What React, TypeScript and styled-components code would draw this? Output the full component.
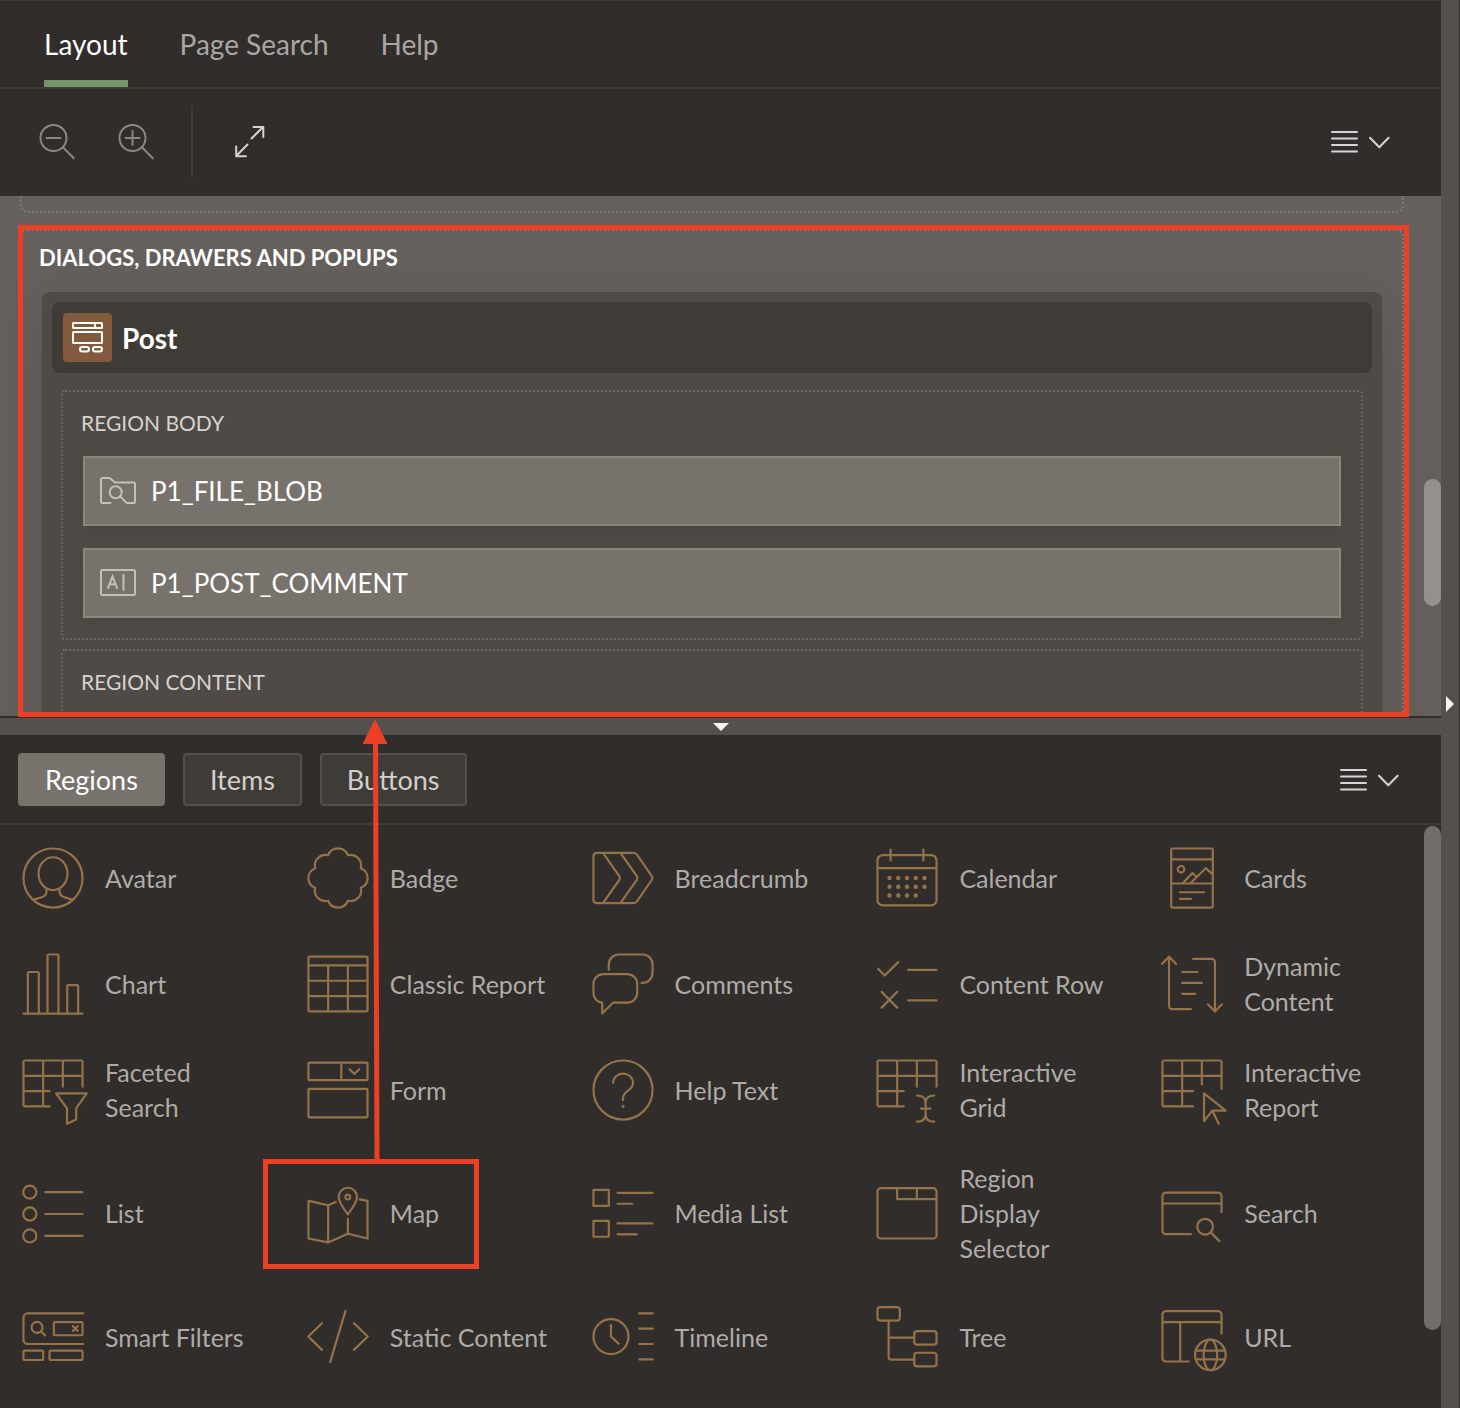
import React, { useState } from "react";
import styled, { createGlobalStyle, css } from "styled-components";

const color = {
  pane: "#312d2a",
  line: "#403c38",
  splitter: "#55504b",
  canvas: "#66605c",
  card: "#4f4a46",
  cardHeader: "#3f3b36",
  dotted: "#7d7874",
  item: "#78726d",
  itemBorder: "#8b8580",
  gold: "#94724a",
  mark: "#eb4026",
};

const GlobalStyle = createGlobalStyle`
  *, *::before, *::after { box-sizing: border-box; }
  body {
    margin: 0;
    background: ${color.pane};
    font-family: Lato, "Liberation Sans", sans-serif;
  }
  button {
    margin: 0;
    padding: 0;
    border: 0;
    background: none;
    color: inherit;
    font: inherit;
    text-align: left;
    cursor: pointer;
  }
  ul { margin: 0; padding: 0; list-style: none; }
  svg { display: block; flex: none; }
`;

const Shell = styled.div`
  display: flex;
  height: 100vh;
  min-height: 1000px;
  overflow: hidden;
  border-right: 1px solid ${color.pane};
`;

const Main = styled.main`
  flex: 1;
  min-width: 0;
  display: flex;
  flex-direction: column;
`;

const SideSplitter = styled.div`
  flex: none;
  width: 18px;
  display: flex;
  align-items: center;
  justify-content: center;
  background: ${color.splitter};
`;

const LayoutPane = styled.section`
  flex: 1 1 0;
  min-height: 0;
  display: flex;
  flex-direction: column;
`;

const Tabs = styled.div`
  display: flex;
  gap: 52px;
  padding: 0 44px;
  border-top: 1px solid ${color.line};
  border-bottom: 2px solid ${color.line};
`;

const Tab = styled.button<{ $active: boolean }>`
  padding: 25px 0 18px;
  line-height: 36px;
  font-size: 28px;
  border-bottom: 7px solid ${(p) => (p.$active ? "#759468" : "transparent")};
  color: ${(p) => (p.$active ? "#fff" : "#a9a6a3")};
`;

const Toolbar = styled.div`
  display: flex;
  align-items: center;
  padding: 17px 51px 19px 39px;
`;

const ToolButton = styled.button<{ $dim?: boolean }>`
  color: ${(p) => (p.$dim ? "#8a8683" : "#d6d4d2")};
`;

const ZoomGroup = styled.div`
  display: flex;
  align-items: center;
  gap: 43px;
  height: 71px;
  padding-right: 37px;
  margin-right: 42px;
  border-right: 2px solid ${color.line};
`;

const Spacer = styled.div`
  flex: 1;
`;

const Canvas = styled.div`
  position: relative;
  flex: 1;
  min-height: 0;
  background: ${color.canvas};
`;

const Viewport = styled.div`
  height: 100%;
  overflow: hidden;
  padding: 0 37px 0 20px;
`;

const PreviousSlot = styled.div`
  height: 17px;
  margin-bottom: 16px;
  border: 2px dotted ${color.dotted};
  border-top: 0;
  border-radius: 0 0 8px 8px;
`;

const PageSlot = styled.section`
  padding: 11px 20px 0;
  border: 2px dotted ${color.dotted};
  border-radius: 8px;
`;

const PageSlotTitle = styled.h2`
  margin: 0 -3px 18px;
  line-height: 32px;
  font-size: 22px;
  font-weight: 700;
  color: #fff;
`;

const Card = styled.article`
  padding: 10px;
  border-radius: 8px;
  background: ${color.card};
  box-shadow: 0 16px 60px rgba(0, 0, 0, 0.12);
`;

const CardHeader = styled.header`
  display: flex;
  align-items: center;
  gap: 10px;
  padding: 11px;
  margin-bottom: 17px;
  border-radius: 8px;
  background: ${color.cardHeader};
  color: #fff;
  font-size: 28px;
  font-weight: 700;
`;

const CardBadge = styled.span`
  display: flex;
  align-items: center;
  justify-content: center;
  width: 49px;
  height: 49px;
  border-radius: 4px;
  background: #835a3d;
`;

const Slot = styled.section`
  display: flex;
  flex-direction: column;
  gap: 22px;
  min-height: 140px;
  padding: 15px 20px 20px;
  margin: 0 9px 9px;
  border: 2px dotted #6c6763;
  border-radius: 4px;
`;

const SlotTitle = styled.h3`
  margin: 0 -2px -5px;
  line-height: 32px;
  font-size: 21px;
  font-weight: 400;
  color: #d6d3d1;
`;

const PageItem = styled.button`
  display: flex;
  align-items: center;
  gap: 15px;
  height: 70px;
  padding: 0 15px;
  border: 2px solid ${color.itemBorder};
  background: ${color.item};
  box-shadow: 0 4px 12px rgba(0, 0, 0, 0.08);
  color: #fff;
  font-size: 26px;

  svg { color: #c2bfbc; }
`;

const thumb = css`
  position: absolute;
  right: 0;
  width: 17px;
  border-radius: 9px;
`;

const CanvasThumb = styled.div`
  ${thumb}
  top: 283px;
  height: 127px;
  background: #95908c;
`;

const GalleryThumb = styled.div`
  ${thumb}
  top: 1px;
  height: 504px;
  background: #716d6a;
`;

const Frame = styled.div<{ $inset: string }>`
  position: absolute;
  inset: ${(p) => p.$inset};
  z-index: 2;
  border: 5px solid ${color.mark};
  pointer-events: none;
`;

const Splitter = styled.div`
  display: flex;
  align-items: center;
  justify-content: center;
  height: 19px;
  border-top: 2px solid ${color.pane};
  background: ${color.splitter};
`;

const Gallery = styled.section`
  position: relative;
  flex: none;
`;

const GalleryBar = styled.div`
  display: flex;
  align-items: center;
  gap: 18px;
  padding: 18px 42px 17px 18px;
  border-bottom: 2px solid ${color.line};
`;

const Pill = styled.button<{ $active: boolean }>`
  padding: 0 25px;
  line-height: 49px;
  font-size: 27px;
  border: 2px solid ${(p) => (p.$active ? color.item : color.splitter)};
  border-radius: 4px;
  background: ${(p) => (p.$active ? color.item : color.cardHeader)};
  color: ${(p) => (p.$active ? "#fff" : "#d2cfcd")};
`;

const GalleryBody = styled.div`
  position: relative;
  padding: 0 17px 18px 0;
`;

const Grid = styled.ul`
  display: grid;
  grid-template-columns: repeat(5, minmax(0, 1fr));
`;

const Cell = styled.li`
  position: relative;
  display: flex;
`;

const Tile = styled.button`
  flex: 1;
  display: flex;
  align-items: center;
  gap: 17px;
  padding: 18px 20px 18px 18px;
  line-height: 35px;
  font-size: 25px;
  color: #aeaba8;

  svg { color: ${color.gold}; }
`;

const Arrow = styled.svg`
  position: absolute;
  top: -16px;
  left: 363px;
  z-index: 3;
  pointer-events: none;
`;

const gridBase = "M3 2.5H29M2.5 9.5H29.5M2.5 16.5H14.5M3 23.5H14.5M2.5 3V23M11.5 2.5V23.5";

const icons: Record<string, React.ReactNode> = {
  Avatar: (
    <>
      <circle cx="16" cy="16" r="13.5" />
      <ellipse cx="16" cy="14" rx="6.6" ry="7.5" />
      <path d="M13 21.1v1.2c0 1.3-.7 1.9-1.9 2.4L7 26M19 21.1v1.2c0 1.3.7 1.9 1.9 2.4L25 26" />
    </>
  ),
  Badge: (
    <path d="M11.5 5.6A4.8 4.8 0 0 1 20.5 5.6A4.8 4.8 0 0 1 26.4 11.5A4.8 4.8 0 0 1 26.4 20.5A4.8 4.8 0 0 1 20.5 26.4A4.8 4.8 0 0 1 11.5 26.4A4.8 4.8 0 0 1 5.6 20.5A4.8 4.8 0 0 1 5.6 11.5A4.8 4.8 0 0 1 11.5 5.6Z" />
  ),
  Breadcrumb: (
    <>
      <path d="M4 4.5H20.8c.7 0 1.2.3 1.6.8L29.2 15.2q.5.8 0 1.6L22.4 26.7c-.4.5-.9.8-1.6.8H4A1.5 1.5 0 0 1 2.5 26V6A1.5 1.5 0 0 1 4 4.5Z" />
      <path d="M7 4.7L14.4 15.3q.4.7 0 1.4L7 27.3M15 4.7L22.4 15.3q.4.7 0 1.4L15 27.3" />
    </>
  ),
  Calendar: (
    <>
      <rect x="2.5" y="5.5" width="27" height="23" rx="2.5" />
      <path d="M2.5 11.5H29.5M8.5 3V8M23.5 3V8" />
      <g fill="currentColor" stroke="none">
        {[16, 20, 24].map((y) =>
          [8, 12, 16, 20, 24].map((x) =>
            x === 24 && y === 24 ? null : <circle key={`${x}-${y}`} cx={x} cy={y} r="1" />
          )
        )}
      </g>
    </>
  ),
  Cards: (
    <>
      <rect x="6.5" y="2.5" width="19" height="27" rx=".5" />
      <path d="M6.5 7.5h19M6.5 18.5h19M12 18.2L16.2 13.7L18 15.4M15.5 18.2L22.3 11.5L25.3 14.2M10.5 22.5H21.5M10.5 25.5H15.5" />
      <circle cx="11" cy="12" r="1.5" />
    </>
  ),
  Chart: <path d="M2.5 29.5h27M4.5 29.5V11q0-.5.5-.5h4q.5 0 .5.5v18.5M13.5 29.5V3q0-.5.5-.5h4q.5 0 .5.5v26.5M22.5 29.5V17q0-.5.5-.5h4q.5 0 .5.5v12.5" />,
  "Classic Report": (
    <>
      <rect x="2.5" y="3.5" width="27" height="25" rx=".5" />
      <path d="M2.5 7.5h27M2.5 14.5h27M2.5 21.5h27M11.5 7.5v21M20.5 7.5v21" />
    </>
  ),
  Comments: (
    <>
      <path d="M9.5 9.5V7A4.5 4.5 0 0 1 14 2.5H25A4.5 4.5 0 0 1 29.5 7V11A4.5 4.5 0 0 1 25 15.5H24.5" />
      <path d="M7 11.5H18a4.5 4.5 0 0 1 4.5 4.5v4a4.5 4.5 0 0 1-4.5 4.5H11.5L6.5 29.5V24.5A4.3 4.3 0 0 1 2.5 20V16A4.5 4.5 0 0 1 7 11.5Z" />
    </>
  ),
  "Content Row": <path d="M2.8 9L5.8 12.1L12 6M16.5 9.5h13M4.4 19.6L11.5 26.8M11.5 19.6L4.4 26.8M16.5 23.5h13" />,
  "Dynamic Content": (
    <path d="M2.3 6.8L5.5 3.5L8.7 6.8M5.5 3.7V26a1.5 1.5 0 0 0 1.5 1.5h8.5M16.5 4.5H25A1.5 1.5 0 0 1 26.5 6V28.5M23.3 25.3L26.5 28.6L29.7 25.3M11.5 10.5h7M11.5 15.5h9M11.5 20.5h6" />
  ),
  "Faceted Search": (
    <path d={`${gridBase}M20.5 2.5V14.5M29.5 3V14.5M17.4 17.5H31.4L26.6 24.4V29.5L22.4 31.4V24.4Z`} />
  ),
  Form: (
    <>
      <rect x="2.5" y="3.5" width="27" height="8" rx=".5" />
      <rect x="2.5" y="15.5" width="27" height="13" rx=".5" />
      <path d="M17.5 3.5v8M21.3 6.5l2.2 2.2l2.2-2.2" />
    </>
  ),
  "Help Text": (
    <>
      <circle cx="16" cy="16" r="13.5" />
      <path d="M11.5 12.7c0-2.4 2-4.2 4.5-4.2s4.6 1.8 4.6 4.3c0 3.7-4.6 3.3-4.6 7v.8" />
      <circle cx="16" cy="23.4" r=".7" fill="currentColor" stroke="none" />
    </>
  ),
  "Interactive Grid": (
    <path d={`${gridBase}M20.5 2.5V14.5M29.5 3V14.5M20.5 18.5c2.6 0 4 1 4 3.4v5.2c0 2.4-1.4 3.4-4 3.4M28.5 18.5c-2.6 0-4 1-4 3.4v5.2c0 2.4 1.4 3.4 4 3.4M22.4 24.5h4.3`} />
  ),
  "Interactive Report": (
    <path d={`${gridBase}M14.5 16.5h2M14.5 23.5h2M20.5 2.5V13.5M29.5 3V15.5M21.5 17.5L31.4 25.4H25.3L21.5 30.2ZM25.3 25.4L28.2 31.4`} />
  ),
  List: (
    <>
      {[6, 16, 26].map((y) => (
        <g key={y}>
          <circle cx="5.4" cy={y} r="3" />
          <path d={`M12.5 ${y}h17`} />
        </g>
      ))}
    </>
  ),
  Map: (
    <>
      <path d="M15 10.5L11.5 12L2.5 10V27.2L11.5 29L20.5 25L29.5 27.2V10L26 9.3M11.5 12V29M20.5 18.2V25" />
      <path d="M20.5 16.2C18 12.8 16.3 10.3 16.3 8.2a4.2 4.2 0 0 1 8.4 0C24.7 10.3 23 12.8 20.5 16.2Z" />
      <circle cx="20.5" cy="8.2" r="1.1" />
    </>
  ),
  "Media List": (
    <>
      <rect x="2.5" y="5" width="7" height="7.3" />
      <rect x="2.5" y="19.1" width="7" height="7.3" />
      <path d="M13.5 6.3h16M13.5 11.3h6.8M13.5 20.3h16M13.5 25.3h8.8" />
    </>
  ),
  "Region Display Selector": (
    <>
      <rect x="2.5" y="4.2" width="27" height="23" rx="1.5" />
      <path d="M11.5 4.2v5h18M20.5 4.2v5" />
    </>
  ),
  Search: (
    <>
      <path d="M29.5 15.2V7.7A1.5 1.5 0 0 0 28 6.2H4A1.5 1.5 0 0 0 2.5 7.7V23.7A1.5 1.5 0 0 0 4 25.2H15.5M2.5 11.2h27M24.6 24.4L28.5 28.4" />
      <circle cx="22" cy="21.8" r="3.6" />
    </>
  ),
  "Smart Filters": (
    <>
      <path d="M29.8 5.2H4.5A2 2 0 0 0 2.5 7.2V17.2A2 2 0 0 0 4.5 19.2H29.8M10.5 13.4L12.4 15.3M25.1 11.1l2.2 2.2M27.3 11.1l-2.2 2.2" />
      <circle cx="8.7" cy="11.6" r="2.5" />
      <rect x="16.4" y="9.2" width="13.1" height="6" rx=".5" />
      <rect x="2.5" y="22.2" width="9" height="4.3" rx=".5" />
      <rect x="14.4" y="22.2" width="15.1" height="4.3" rx=".5" />
    </>
  ),
  "Static Content": <path d="M8.7 9.7L2.4 15.8L8.7 21.9M23.3 9.7L29.6 15.8L23.3 21.9M19.4 4.1L12.4 27.5" />,
  Timeline: (
    <>
      <circle cx="10.5" cy="15.8" r="8" />
      <path d="M10.5 10.5V15.8L14 19.1M23.4 5.2h6.2M23.4 12.2h6.2M23.4 19.2h6.2M23.4 26.2h6.2" />
    </>
  ),
  Tree: (
    <>
      <rect x="2.5" y="2.3" width="10.2" height="6.2" rx="1.3" />
      <rect x="19.3" y="13.3" width="10.2" height="6.2" rx="1.3" />
      <rect x="19.3" y="23.2" width="10.2" height="6.2" rx="1.3" />
      <path d="M7.6 8.5V25.3a1 1 0 0 0 1 1H19.3M7.6 16.3H19.3" />
    </>
  ),
  URL: (
    <>
      <path d="M29.5 14.5V5.7A1.5 1.5 0 0 0 28 4.2H4A1.5 1.5 0 0 0 2.5 5.7V25.7A1.5 1.5 0 0 0 4 27.2H14.5M2.5 9.2h27M10.6 9.2v18M17.7 22.2H31.1M17.7 26.2H31.1" />
      <circle cx="24.4" cy="24.2" r="7" />
      <ellipse cx="24.4" cy="24.2" rx="3.1" ry="7" />
    </>
  ),
};

const regionTypes = Object.keys(icons);

const RegionIcon = ({ name }: { name: string }) => (
  <svg width="70" height="70" viewBox="0 0 32 32" fill="none" stroke="currentColor" strokeLinecap="round" strokeLinejoin="round" aria-hidden="true">
    {icons[name]}
  </svg>
);

const ZoomIcon = ({ plus }: { plus?: boolean }) => (
  <svg width="36" height="36" viewBox="0 0 36 36" fill="none" stroke="currentColor" strokeWidth="2" strokeLinecap="round" aria-hidden="true">
    <circle cx="14.5" cy="14" r="13" />
    <path d="M24.2 23.5L34.8 34.3M7.5 14h14" />
    {plus && <path d="M14.5 7v14" />}
  </svg>
);

const ExpandIcon = () => (
  <svg width="30" height="32" viewBox="0 0 30 32" fill="none" stroke="currentColor" strokeWidth="2" strokeLinecap="round" strokeLinejoin="round" aria-hidden="true">
    <path d="M16.5 12.5L28 1M18.5 1H28.3V11M12.5 18.5L1.2 30M1.2 20.5V30.3H11" />
  </svg>
);

const MenuIcon = () => (
  <svg width="59" height="24" viewBox="0 0 59 24" fill="none" stroke="currentColor" strokeWidth="2" strokeLinecap="round" strokeLinejoin="round" aria-hidden="true">
    <path d="M1 2h25M1 8.5h25M1 15h25M1 21.5h25M39 7.7l9.3 9.6l9.3-9.6" />
  </svg>
);

const PopupIcon = () => (
  <svg width="33" height="33" viewBox="0 0 33 33" fill="none" stroke="#fff" strokeWidth="2" aria-hidden="true">
    <rect x="2" y="2" width="29" height="5" rx=".5" />
    <rect x="2" y="11" width="29" height="11" rx=".5" />
    <path d="M24 2v5" />
    <rect x="9" y="26" width="9" height="4.4" rx="2.2" />
    <rect x="22" y="26" width="9" height="4.4" rx="2.2" />
  </svg>
);

const FileIcon = () => (
  <svg width="36" height="28" viewBox="0 0 36 28" fill="none" stroke="currentColor" strokeWidth="2" strokeLinecap="round" strokeLinejoin="round" aria-hidden="true">
    <path d="M10.5 26H2.5Q1 26 1 24.5V2.5Q1 1 2.5 1H9Q10 1 10.8 1.8L14 4.8Q14.8 5.6 15.8 5.6H33.5Q35 5.6 35 7.1V24.5Q35 26 33.5 26H27.5Q26.5 26 25.8 25.1L20.3 19.5" />
    <circle cx="15.7" cy="15.3" r="6" />
  </svg>
);

const TextIcon = () => (
  <svg width="36" height="28" viewBox="0 0 36 28" fill="none" stroke="currentColor" strokeWidth="2" strokeLinecap="round" aria-hidden="true">
    <rect x="1" y="1" width="34" height="25" rx="1.5" />
    <path d="M8 19L12.5 7.5L17 19M9.6 15.3h5.8M23.5 6v15" />
  </svg>
);

export default function App() {
  const [tab, setTab] = useState("Layout");
  const [kind, setKind] = useState("Regions");

  return (
    <>
      <GlobalStyle />
      <Shell>
        <Main>
          <LayoutPane>
            <Tabs role="tablist">
              {["Layout", "Page Search", "Help"].map((t) => (
                <Tab key={t} role="tab" aria-selected={t === tab} $active={t === tab} onClick={() => setTab(t)}>
                  {t}
                </Tab>
              ))}
            </Tabs>
            <Toolbar>
              <ZoomGroup>
                <ToolButton $dim aria-label="Zoom out"><ZoomIcon /></ToolButton>
                <ToolButton $dim aria-label="Zoom in"><ZoomIcon plus /></ToolButton>
              </ZoomGroup>
              <ToolButton aria-label="Expand"><ExpandIcon /></ToolButton>
              <Spacer />
              <ToolButton aria-label="Layout menu"><MenuIcon /></ToolButton>
            </Toolbar>
            <Canvas>
              <Viewport>
                <PreviousSlot />
                <PageSlot>
                  <PageSlotTitle>DIALOGS, DRAWERS AND POPUPS</PageSlotTitle>
                  <Card>
                    <CardHeader>
                      <CardBadge><PopupIcon /></CardBadge>
                      Post
                    </CardHeader>
                    <Slot>
                      <SlotTitle>REGION BODY</SlotTitle>
                      <PageItem><FileIcon />P1_FILE_BLOB</PageItem>
                      <PageItem><TextIcon />P1_POST_COMMENT</PageItem>
                    </Slot>
                    <Slot>
                      <SlotTitle>REGION CONTENT</SlotTitle>
                    </Slot>
                  </Card>
                </PageSlot>
              </Viewport>
              <CanvasThumb />
              <Frame $inset="29px 32px -1px 18px" />
            </Canvas>
          </LayoutPane>
          <Splitter>
            <button aria-label="Collapse gallery">
              <svg width="16" height="8" viewBox="0 0 16 8" fill="#f5f4f2" aria-hidden="true"><path d="M0 0h16L8 8z" /></svg>
            </button>
          </Splitter>
          <Gallery>
            <GalleryBar>
              {["Regions", "Items", "Buttons"].map((k) => (
                <Pill key={k} aria-pressed={k === kind} $active={k === kind} onClick={() => setKind(k)}>
                  {k}
                </Pill>
              ))}
              <Spacer />
              <ToolButton aria-label="Gallery menu"><MenuIcon /></ToolButton>
            </GalleryBar>
            <GalleryBody>
              <Grid>
                {regionTypes.map((name) => (
                  <Cell key={name}>
                    <Tile><RegionIcon name={name} /><span>{name}</span></Tile>
                    {name === "Map" && <Frame $inset="16px 91px 15px -22px" />}
                  </Cell>
                ))}
              </Grid>
              <GalleryThumb />
            </GalleryBody>
            <Arrow width="26" height="442" viewBox="0 0 26 442" aria-hidden="true">
              <path d="M12 0L24.5 25H-.5Z" fill={color.mark} />
              <path d="M12.5 22L14 442" stroke={color.mark} strokeWidth="5" />
            </Arrow>
          </Gallery>
        </Main>
        <SideSplitter>
          <button aria-label="Collapse side panel">
            <svg width="8" height="16" viewBox="0 0 8 16" fill="#f5f4f2" aria-hidden="true"><path d="M0 0v16l8-8z" /></svg>
          </button>
        </SideSplitter>
      </Shell>
    </>
  );
}
